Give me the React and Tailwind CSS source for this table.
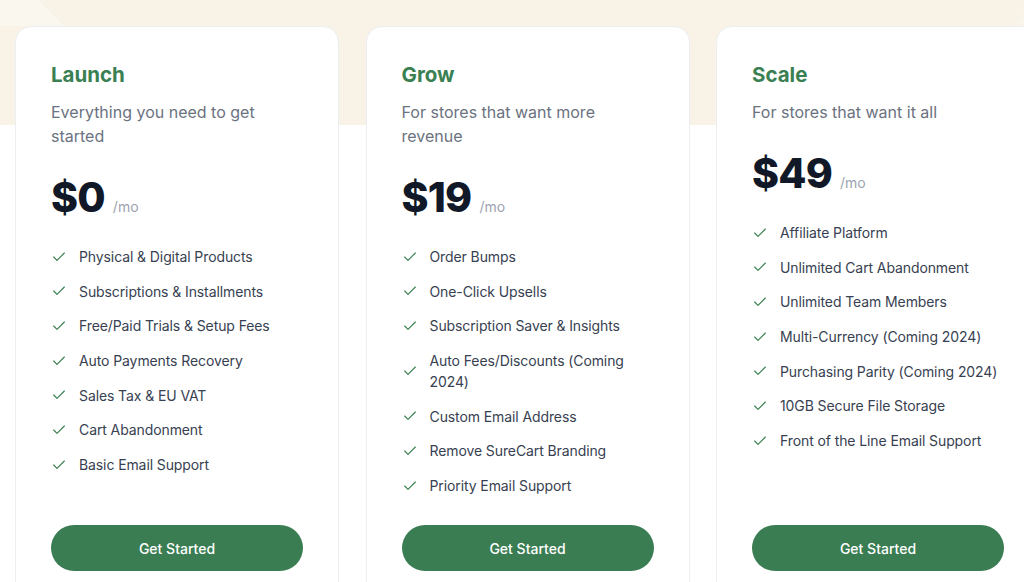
import React from 'react';
import { Check } from 'lucide-react';

const plans = [
  {
    name: 'Launch',
    description: 'Everything you need to get started',
    price: '$0',
    features: [
      'Physical & Digital Products',
      'Subscriptions & Installments',
      'Free/Paid Trials & Setup Fees',
      'Auto Payments Recovery',
      'Sales Tax & EU VAT',
      'Cart Abandonment',
      'Basic Email Support',
    ],
  },
  {
    name: 'Grow',
    description: 'For stores that want more revenue',
    price: '$19',
    features: [
      'Order Bumps',
      'One-Click Upsells',
      'Subscription Saver & Insights',
      'Auto Fees/Discounts (Coming 2024)',
      'Custom Email Address',
      'Remove SureCart Branding',
      'Priority Email Support',
    ],
  },
  {
    name: 'Scale',
    description: 'For stores that want it all',
    price: '$49',
    features: [
      'Affiliate Platform',
      'Unlimited Cart Abandonment',
      'Unlimited Team Members',
      'Multi-Currency (Coming 2024)',
      'Purchasing Parity (Coming 2024)',
      '10GB Secure File Storage',
      'Front of the Line Email Support',
    ],
  },
];

function PlanCard({ plan }) {
  return (
    <div className="flex flex-col w-[324px] h-[581px] shrink-0 bg-white border border-[#eceef1] rounded-[16px] px-[35px] pt-[34px] pb-[35px]">
      <h3 className="text-[20.5px] leading-[28px] font-bold text-[#3a8052]">{plan.name}</h3>
      <p className="mt-[11px] text-[16px] leading-[24px] text-[#6b7280] pr-[40px]">{plan.description}</p>

      {/* Price */}
      <div className="mt-[29px] flex items-baseline gap-[8px]">
        <span className="text-[41px] leading-[40px] font-extrabold text-[#111827] tracking-[-0.8px]">
          {plan.price}
        </span>
        <span className="text-[14px] text-[#9ca3af]">/mo</span>
      </div>

      <ul className="mt-[29px] flex flex-col gap-[13.7px]">
        {plan.features.map((f) => (
          <li key={f} className="flex items-center gap-[12px]">
            <Check className="w-[16px] h-[16px] shrink-0 text-[#3a8052]" strokeWidth={1.75} />
            <span className="text-[14px] leading-[21px] text-[#374151] tracking-[-0.1px]">{f}</span>
          </li>
        ))}
      </ul>

      <button className="mt-auto h-[46px] w-full rounded-full bg-[#3a7d53] text-white text-[14px] font-medium">
        Get Started
      </button>
    </div>
  );
}

export default function App() {
  return (
    <div
      className="relative w-full h-[582px] overflow-hidden bg-white"
      style={{ fontFamily: 'Inter, "Noto Sans", sans-serif' }}
    >
      {/* beige band behind the cards */}
      <div className="absolute inset-x-0 top-0 h-[125px] bg-[#f8f3e6]">
        <svg className="absolute inset-0 w-full h-full" preserveAspectRatio="none" viewBox="0 0 1024 125">
          <polygon points="0,0 38,0 64,26 0,26" fill="#faf7ee" />
          <polygon points="1024,12 1024,125 940,125" fill="#f9f5ea" />
        </svg>
      </div>

      <div className="relative flex gap-[26.5px] pl-[15px] pt-[26px]">
        {plans.map((p) => (
          <PlanCard key={p.name} plan={p} />
        ))}
      </div>
    </div>
  );
}
